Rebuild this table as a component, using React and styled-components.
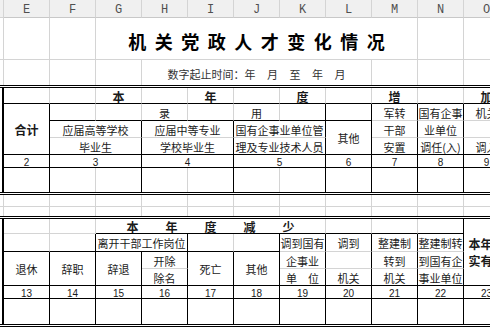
import React from 'react';
import styled, { createGlobalStyle } from 'styled-components';

const GRID = '#d4d4d4';
const INK = '#000';
const line = (k) => (k === 'k' ? `1px solid ${INK}` : k === 'g' ? `1px solid ${GRID}` : 'none');

const Global = createGlobalStyle`
  html, body { margin: 0; padding: 0; background: #fff; overflow: hidden; }
  body { font-family: "Noto Sans CJK SC", "Noto Sans", sans-serif; }
`;

const Sheet = styled.div`
  width: 510px;
  display: flex;
  flex-direction: column;
`;

const Band = styled.div`
  display: grid;
  grid-template-columns: 4px repeat(11, 46px);
  grid-template-rows: ${(p) => p.$rows};
  border-top: ${(p) => (p.$boxed ? `3px double ${INK}` : 'none')};
  border-bottom: ${(p) => (p.$boxed ? `3px double ${INK}` : 'none')};
`;

const Stub = styled.div`
  grid-column: 1;
  grid-row: ${(p) => p.$row} / span ${(p) => p.$rs || 1};
  box-sizing: border-box;
  background: ${(p) => (p.$head ? '#f0f0f0' : '#fff')};
  border-right: ${(p) => (p.$table ? `2px solid ${INK}` : `1px solid ${GRID}`)};
  border-bottom: ${(p) => line(p.$b || 'n')};
`;

const ColHead = styled.div`
  grid-column: ${(p) => p.$c + 1};
  grid-row: 1;
  box-sizing: border-box;
  background: #f0f0f0;
  border-right: 1px solid ${GRID};
  border-bottom: 1px solid #c8c8c8;
  display: flex;
  align-items: center;
  justify-content: center;
  padding-top: 3px;
  font-family: "Liberation Mono", monospace;
  font-size: 12px;
  color: #505050;
`;

const Cell = styled.div`
  grid-column: ${(p) => p.$c + 1} / span ${(p) => p.$cs || 1};
  grid-row: ${(p) => p.$r} / span ${(p) => p.$rs || 1};
  box-sizing: border-box;
  min-width: 0;
  overflow: hidden;
  border-right: ${(p) => line(p.$rb || 'g')};
  border-bottom: ${(p) => line(p.$bb || 'g')};
  display: flex;
  align-items: center;
  justify-content: center;
  padding-top: 2px;
  font-size: ${(p) => (p.$bold ? 12 : 11)}px;
  font-weight: ${(p) => (p.$bold ? 700 : 400)};
  color: #1a1a1a;
  white-space: nowrap;
  line-height: 1;
`;

const Num = styled(Cell)`
  font-family: "Liberation Sans", Arial, sans-serif;
  font-size: 10px;
  padding-top: 3px;
`;

const Title = styled(Cell)`
  font-size: 18px;
  font-weight: 700;
  color: #000;
  letter-spacing: 8.5px;
  padding-left: 8.5px;
  padding-top: 4px;
`;

const Subtitle = styled(Cell)`
  color: #333;
  padding-top: 3px;
  padding-left: 11.5px;
`;

const Dates = styled.span`
  letter-spacing: 11.5px;
`;

const Spread = styled(Cell)`
  letter-spacing: 27px;
  padding-left: 27px;
`;

const Wrapped = styled(Cell)`
  white-space: normal;
  text-align: center;
  line-height: 17px;
  padding: 0 2px;
`;

const COLS = ['E', 'F', 'G', 'H', 'I', 'J', 'K', 'L', 'M', 'N', 'O'];

function Blank({ r, bb }) {
  return COLS.map((c, i) => <Cell key={c + r} $c={i + 1} $r={r} $bb={bb} />);
}

export default function App() {
  return (
    <>
      <Global />
      <Sheet>
        {/* column header + title rows */}
        <Band $rows="18px 42px 25px">
          <Stub $row={1} $head $b="g" />
          {COLS.map((c, i) => (
            <ColHead key={c} $c={i + 1}>{c}</ColHead>
          ))}

          <Stub $row={2} $b="g" />
          <Cell $c={1} $r={2} />
          <Cell $c={2} $r={2} />
          <Title $c={3} $cs={7} $r={2}>机关党政人才变化情况</Title>
          <Cell $c={10} $r={2} />
          <Cell $c={11} $r={2} />

          <Stub $row={3} />
          <Cell $c={1} $r={3} $bb="n" />
          <Cell $c={2} $r={3} $bb="n" />
          <Cell $c={3} $r={3} $bb="n" />
          <Subtitle $c={4} $cs={5} $r={3} $bb="n">
            数字起止时间：<Dates>年月至年月</Dates>
          </Subtitle>
          <Cell $c={9} $r={3} $bb="n" />
          <Cell $c={10} $r={3} $bb="n" />
          <Cell $c={11} $r={3} $bb="n" />
        </Band>

        {/* table 1: 本年度增加 */}
        <Band $boxed $rows="16px 17px 17px 17px 13px 24px">
          <Stub $row={1} $rs={6} $table />
          <Cell $c={1} $r={1} $bb="k" />
          <Cell $c={2} $r={1} $bb="k" />
          <Cell $c={3} $r={1} $bb="k" $bold>本</Cell>
          <Cell $c={4} $r={1} $bb="k" />
          <Cell $c={5} $r={1} $bb="k" $bold>年</Cell>
          <Cell $c={6} $r={1} $bb="k" />
          <Cell $c={7} $r={1} $bb="k" $bold>度</Cell>
          <Cell $c={8} $r={1} $bb="k" />
          <Cell $c={9} $r={1} $bb="k" $bold>增</Cell>
          <Cell $c={10} $r={1} $bb="k" />
          <Cell $c={11} $r={1} $bb="k" $bold>加</Cell>

          <Cell $c={1} $r={2} $rs={3} $rb="k" $bb="k" $bold>合计</Cell>
          <Cell $c={2} $r={2} $bb="k" />
          <Cell $c={3} $r={2} $bb="k" />
          <Cell $c={4} $r={2} $bb="k">录</Cell>
          <Cell $c={5} $r={2} $bb="k" />
          <Cell $c={6} $r={2} $bb="k">用</Cell>
          <Cell $c={7} $r={2} $rb="k" $bb="k" />
          <Cell $c={8} $r={2} $rb="k" $bb="k" />
          <Cell $c={9} $r={2} $rb="k">军转</Cell>
          <Cell $c={10} $r={2} $rb="k">国有企事</Cell>
          <Cell $c={11} $r={2} $rb="k">机关</Cell>

          <Cell $c={2} $cs={2} $r={3} $rb="k">应届高等学校</Cell>
          <Cell $c={4} $cs={2} $r={3} $rb="k">应届中等专业</Cell>
          <Cell $c={6} $cs={2} $r={3} $rb="k">国有企事业单位管</Cell>
          <Cell $c={8} $r={3} $rs={2} $rb="k" $bb="k">其他</Cell>
          <Cell $c={9} $r={3} $rb="k">干部</Cell>
          <Cell $c={10} $r={3} $rb="k">业单位</Cell>
          <Cell $c={11} $r={3} $rb="k" />

          <Cell $c={2} $cs={2} $r={4} $rb="k" $bb="k">毕业生</Cell>
          <Cell $c={4} $cs={2} $r={4} $rb="k" $bb="k">学校毕业生</Cell>
          <Cell $c={6} $cs={2} $r={4} $rb="k" $bb="k">理及专业技术人员</Cell>
          <Cell $c={9} $r={4} $rb="k" $bb="k">安置</Cell>
          <Cell $c={10} $r={4} $rb="k" $bb="k">调任(入)</Cell>
          <Cell $c={11} $r={4} $rb="k" $bb="k">调入</Cell>

          <Num $c={1} $r={5} $rb="k" $bb="k">2</Num>
          <Num $c={2} $cs={2} $r={5} $rb="k" $bb="k">3</Num>
          <Num $c={4} $cs={2} $r={5} $rb="k" $bb="k">4</Num>
          <Num $c={6} $cs={2} $r={5} $rb="k" $bb="k">5</Num>
          <Num $c={8} $r={5} $rb="k" $bb="k">6</Num>
          <Num $c={9} $r={5} $rb="k" $bb="k">7</Num>
          <Num $c={10} $r={5} $rb="k" $bb="k">8</Num>
          <Num $c={11} $r={5} $rb="k" $bb="k">9</Num>

          <Cell $c={1} $r={6} $rb="k" $bb="n" />
          <Cell $c={2} $r={6} $bb="n" />
          <Cell $c={3} $r={6} $rb="k" $bb="n" />
          <Cell $c={4} $r={6} $bb="n" />
          <Cell $c={5} $r={6} $rb="k" $bb="n" />
          <Cell $c={6} $r={6} $bb="n" />
          <Cell $c={7} $r={6} $rb="k" $bb="n" />
          <Cell $c={8} $r={6} $rb="k" $bb="n" />
          <Cell $c={9} $r={6} $rb="k" $bb="n" />
          <Cell $c={10} $r={6} $rb="k" $bb="n" />
          <Cell $c={11} $r={6} $rb="k" $bb="n" />
        </Band>

        {/* plain rows between the tables */}
        <Band $rows="12px 9px">
          <Stub $row={1} $b="g" />
          <Blank r={1} bb="g" />
          <Stub $row={2} />
          <Blank r={2} bb="n" />
        </Band>

        {/* table 2: 本年度减少 */}
        <Band $boxed $rows="15px 18px 17px 17px 13px 25px">
          <Stub $row={1} $rs={6} $table />
          <Cell $c={1} $r={1} />
          <Cell $c={2} $r={1} />
          <Spread $c={3} $cs={5} $r={1} $bb="k" $bold>本年度减少</Spread>
          <Cell $c={8} $r={1} $bb="k" />
          <Cell $c={9} $r={1} $bb="k" />
          <Cell $c={10} $r={1} $rb="k" $bb="k" />
          <Wrapped $c={11} $r={1} $rs={4} $rb="k" $bb="k" $bold>本年末实有数</Wrapped>

          <Cell $c={1} $r={2} $bb="k" />
          <Cell $c={2} $r={2} $rb="k" $bb="k" />
          <Cell $c={3} $cs={2} $r={2} $rb="k" $bb="k">离开干部工作岗位</Cell>
          <Cell $c={5} $r={2} $bb="k" />
          <Cell $c={6} $r={2} $rb="k" $bb="k" />
          <Cell $c={7} $r={2} $rb="k">调到国有</Cell>
          <Cell $c={8} $r={2} $rb="k">调到</Cell>
          <Cell $c={9} $r={2} $rb="k">整建制</Cell>
          <Cell $c={10} $r={2} $rb="k">整建制转</Cell>

          <Cell $c={1} $r={3} $rs={2} $rb="k" $bb="k">退休</Cell>
          <Cell $c={2} $r={3} $rs={2} $rb="k" $bb="k">辞职</Cell>
          <Cell $c={3} $r={3} $rs={2} $rb="k" $bb="k">辞退</Cell>
          <Cell $c={4} $r={3} $rb="k">开除</Cell>
          <Cell $c={5} $r={3} $rs={2} $rb="k" $bb="k">死亡</Cell>
          <Cell $c={6} $r={3} $rs={2} $rb="k" $bb="k">其他</Cell>
          <Cell $c={7} $r={3} $rb="k">企事业</Cell>
          <Cell $c={8} $r={3} $rb="k" />
          <Cell $c={9} $r={3} $rb="k">转到</Cell>
          <Cell $c={10} $r={3} $rb="k">到国有企</Cell>

          <Cell $c={4} $r={4} $rb="k" $bb="k">除名</Cell>
          <Cell $c={7} $r={4} $rb="k" $bb="k">单　位</Cell>
          <Cell $c={8} $r={4} $rb="k" $bb="k">机关</Cell>
          <Cell $c={9} $r={4} $rb="k" $bb="k">机关</Cell>
          <Cell $c={10} $r={4} $rb="k" $bb="k">事业单位</Cell>

          {COLS.map((c, i) => (
            <Num key={c} $c={i + 1} $r={5} $rb="k" $bb="k">{13 + i}</Num>
          ))}
          {COLS.map((c, i) => (
            <Cell key={c} $c={i + 1} $r={6} $rb="k" $bb="n" />
          ))}
        </Band>
      </Sheet>
    </>
  );
}
